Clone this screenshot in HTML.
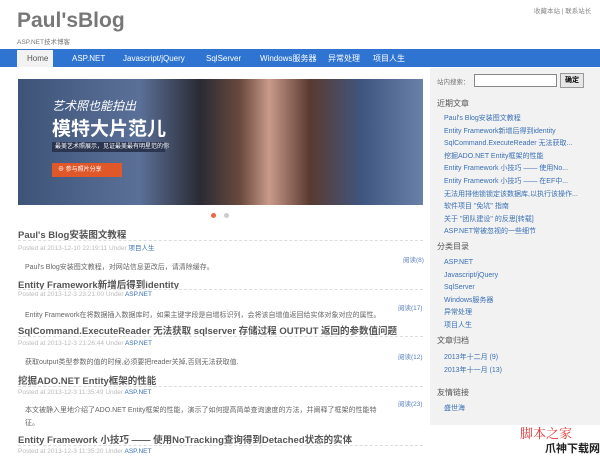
<!DOCTYPE html><html><head><meta charset="utf-8"><style>
body{margin:0;width:600px;height:455px;overflow:hidden;background:#fff;font-family:"Liberation Sans","Noto Sans CJK SC",sans-serif;position:relative}
.a{position:absolute;white-space:nowrap}
.nav{position:absolute;left:0;top:49px;width:600px;height:18px;background:#2e74d0}
.nav span{position:absolute;top:0;line-height:19px;font-size:8px;color:#fff}
.t{font-size:9.5px;font-weight:bold;color:#555}
.p{font-size:6.5px;color:#bbb}
.p b{font-weight:normal;color:#3a6fb5}
.s{font-size:7px;color:#666}
.r{font-size:6.5px;color:#5a82c0}
.dl{position:absolute;left:18px;width:405px;border-top:1px dashed #ddd}
.side{position:absolute;left:430px;top:68px;width:170px;height:357px;background:#f2f2f2}
.h{font-size:8px;color:#555}
.l{font-size:7px;color:#3a6fb5;line-height:12.6px}
</style></head><body>
<div class="a" style="left:17px;top:9px;font-size:21px;font-weight:bold;color:#777">Paul'sBlog</div>
<div class="a" style="left:17px;top:36px;font-size:6.5px;color:#777">ASP.NET技术博客</div>
<div class="a" style="left:534px;top:5px;font-size:6.5px;color:#888">收藏本站 | 联系站长</div>
<div class="nav"><div style="position:absolute;left:17px;top:1px;width:36px;height:17px;background:#f2f2f2"></div>
<span style="left:27px;color:#555">Home</span><span style="left:72px">ASP.NET</span><span style="left:123px">Javascript/jQuery</span><span style="left:206px">SqlServer</span><span style="left:260px">Windows服务器</span><span style="left:328px">异常处理</span><span style="left:373px">项目人生</span></div>
<div class="side"></div>
<div class="a" style="left:18px;top:79px;width:405px;height:126px;background:linear-gradient(90deg,#3d5478 0%,#5b7098 30%,#2a2a33 45%,#6b4a3e 55%,#c99a8a 62%,#5a3a30 72%,#3f5680 85%,#6a81a8 100%)"></div>
<div class="a" style="left:52px;top:97px;font-size:12px;color:#fff;font-style:italic">艺术照也能拍出</div>
<div class="a" style="left:52px;top:114px;font-size:19px;font-weight:bold;color:#fff">模特大片范儿</div>
<div class="a" style="left:52px;top:142px;width:110px;height:10px;background:#2b3550;font-size:6px;color:#fff;line-height:10px;padding-left:3px">最美艺术照展示，见证最美最有明星范的你</div>
<div class="a" style="left:52px;top:163px;width:64px;height:14px;background:#e0582a;font-size:6px;color:#fff;line-height:14px;padding-left:6px">⊕ 参与照片分享</div>
<div class="a" style="left:211px;top:213px;width:5px;height:5px;border-radius:50%;background:#e64"></div>
<div class="a" style="left:224px;top:213px;width:5px;height:5px;border-radius:50%;background:#ccc"></div>

<div class="a t" style="left:18px;top:227px">Paul's Blog安装图文教程</div><div class="dl" style="top:240px"></div>
<div class="a p" style="left:18px;top:242px">Posted at 2013-12-10 22:19:11 Under <b>项目人生</b></div>
<div class="a r" style="left:403px;top:254px">阅读(8)</div>
<div class="a s" style="left:25px;top:262px">Paul's Blog安装图文教程，对网站信息更改后，请清除缓存。</div>
<div class="a t" style="left:18px;top:277px">Entity Framework新增后得到identity</div><div class="dl" style="top:289px"></div>
<div class="a p" style="left:18px;top:291px">Posted at 2013-12-3 23:21:00 Under <b>ASP.NET</b></div>
<div class="a r" style="left:398px;top:302px">阅读(17)</div>
<div class="a s" style="left:25px;top:310px">Entity Framework在将数据插入数据库时，如果主键字段是自增标识列，会将该自增值返回给实体对象对应的属性。</div>
<div class="a t" style="left:18px;top:323px">SqlCommand.ExecuteReader 无法获取 sqlserver 存储过程 OUTPUT 返回的参数值问题</div><div class="dl" style="top:336px"></div>
<div class="a p" style="left:18px;top:340px">Posted at 2013-12-3 21:26:44 Under <b>ASP.NET</b></div>
<div class="a r" style="left:398px;top:351px">阅读(12)</div>
<div class="a s" style="left:25px;top:357px">获取output类型参数的值的时候,必须要把reader关掉,否则无法获取值.</div>
<div class="a t" style="left:18px;top:373px">挖掘ADO.NET Entity框架的性能</div><div class="dl" style="top:386px"></div>
<div class="a p" style="left:18px;top:389px">Posted at 2013-12-3 11:35:49 Under <b>ASP.NET</b></div>
<div class="a r" style="left:398px;top:398px">阅读(23)</div>
<div class="a s" style="left:25px;top:405px">本文被静入里地介绍了ADO.NET Entity框架的性能，演示了如何提高简单查询速度的方法，并阐释了框架的性能特</div>
<div class="a s" style="left:25px;top:418px">征。</div>
<div class="a t" style="left:18px;top:432px">Entity Framework 小技巧 —— 使用NoTracking查询得到Detached状态的实体</div><div class="dl" style="top:445px"></div>
<div class="a p" style="left:18px;top:448px">Posted at 2013-12-3 11:35:20 Under <b>ASP.NET</b></div>

<div class="a" style="left:437px;top:76px;font-size:6.5px;color:#777">站内搜索：</div>
<div class="a" style="left:474px;top:74px;width:81px;height:11px;border:1px solid #888;background:#fff"></div>
<div class="a" style="left:560px;top:73px;width:22px;height:13px;border:1px solid #999;background:#e6e6e6;font-size:7px;font-weight:bold;text-align:center;line-height:13px">确定</div>
<div class="a h" style="left:437px;top:98px">近期文章</div>
<div class="a l" style="left:444px;top:113px">Paul's Blog安装图文教程<br>Entity Framework新增后得到identity<br>SqlCommand.ExecuteReader 无法获取...<br>挖掘ADO.NET Entity框架的性能<br>Entity Framework 小技巧 —— 使用No...<br>Entity Framework 小技巧 —— 在EF中...<br>无法用排他锁锁定该数据库,以执行该操作...<br>软件项目 "免坑" 指南<br>关于 "团队建设" 的反思[转载]<br>ASP.NET常被忽视的一些细节</div>
<div class="a h" style="left:437px;top:241px">分类目录</div>
<div class="a l" style="left:444px;top:257px">ASP.NET<br>Javascript/jQuery<br>SqlServer<br>Windows服务器<br>异常处理<br>项目人生</div>
<div class="a h" style="left:437px;top:335px">文章归档</div>
<div class="a l" style="left:444px;top:352px">2013年十二月 (9)<br>2013年十一月 (13)</div>
<div class="a h" style="left:437px;top:387px">友情链接</div>
<div class="a l" style="left:444px;top:403px">盛世海</div>
<div class="a" style="left:520px;top:423px;font-size:13px;color:#d33;font-family:'Noto Serif CJK SC',serif">脚本之家</div>
<div class="a" style="left:545px;top:440px;font-size:11px;font-weight:bold;color:#222">爪神下载网</div>
</body></html>
